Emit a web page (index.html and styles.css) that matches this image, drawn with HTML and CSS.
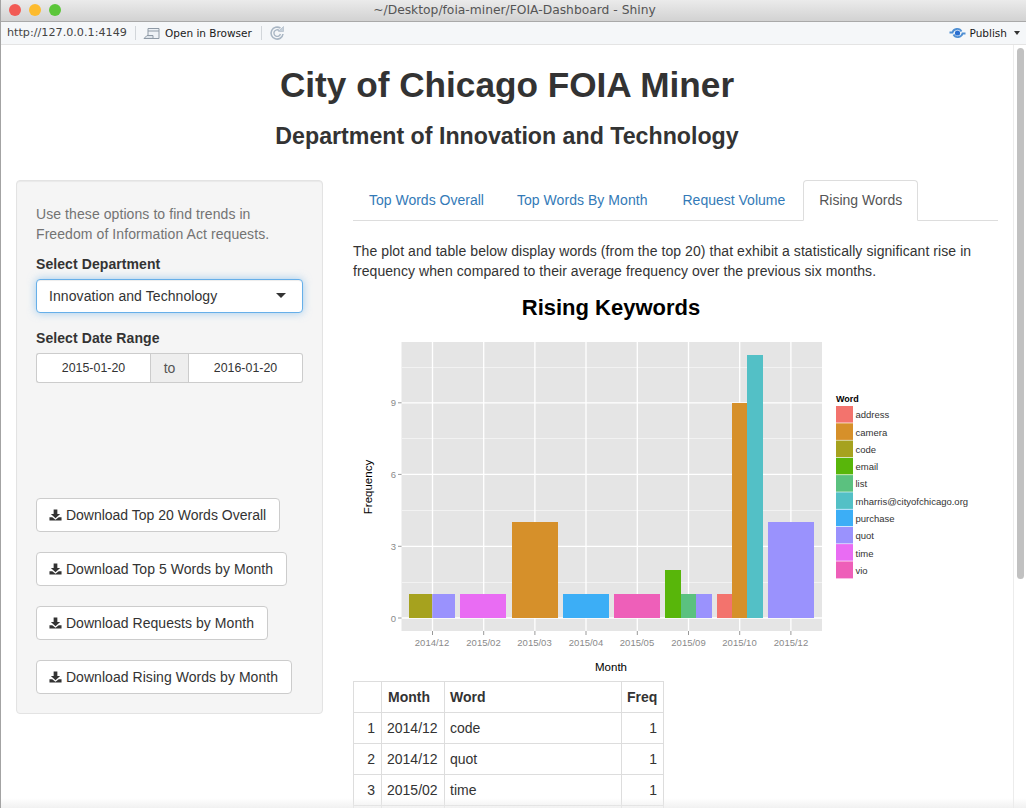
FILE: index.html
```html
<!DOCTYPE html>
<html lang="en">
<head>
<meta charset="utf-8">
<title>City of Chicago FOIA Miner</title>
<link rel="stylesheet" href="styles.css">
</head>
<body>
<div class="window">
  <header class="titlebar">
    <div class="lights"><span class="light red"></span><span class="light yellow"></span><span class="light green"></span></div>
    <div class="window-title">~/Desktop/foia-miner/FOIA-Dashboard - Shiny</div>
  </header>
  <nav class="toolbar">
    <span class="url">http://127.0.0.1:4149</span>
    <span class="sep sep-first"></span>
    <svg class="tool-icon open-icon" width="18" height="14" viewBox="0 0 18 14"><path d="M5 2.500h11v10H5z" fill="#eef2f6" stroke="#8f9aa6"/><path d="M5 5h11" stroke="#8f9aa6"/><path d="M1 12.500l3-3h6v3z" fill="#dfe5eb" stroke="#8f9aa6"/></svg>
    <span class="tool-text">Open in Browser</span>
    <span class="sep sep-second"></span>
    <svg class="tool-icon" width="16" height="16" viewBox="0 0 16 16"><path d="M11.500 3.200A6 6 0 1 0 14 9" fill="none" stroke="#a9b6c4" stroke-width="1.600"/><path d="M10.200 5.400A3.300 3.300 0 1 0 11.400 9" fill="none" stroke="#a9b6c4" stroke-width="1.400"/><path d="M9.500 6.500h5v-5z" fill="#c5d0da" stroke="#a9b6c4" stroke-width=".6"/></svg>
    <span class="spacer"></span>
    <svg class="publish-icon" width="17" height="12" viewBox="0 0 17 12"><path d="M0.500 5.500h3c1-4 7-5 9-1" fill="none" stroke="#4f8fd3" stroke-width="1.800"/><path d="M16.500 6.500h-3c-1 4-7 5-9 1" fill="none" stroke="#4f8fd3" stroke-width="1.800"/><circle cx="8.500" cy="6" r="2.600" fill="#2a6fd0"/></svg>
    <span class="tool-text">Publish</span>
    <span class="menu-caret"></span>
  </nav>
  <div class="viewport">
    <main class="page">
      <h1 class="page-title">City of Chicago FOIA Miner</h1>
      <h2 class="page-subtitle">Department of Innovation and Technology</h2>
      <div class="columns">
        <aside class="well">
          <p class="help">Use these options to find trends in Freedom of Information Act requests.</p>
          <div class="field-label">Select Department</div>
          <div class="select">Innovation and Technology<span class="select-caret"></span></div>
          <div class="field-label date-label">Select Date Range</div>
          <div class="daterange">
            <span class="date">2015-01-20</span>
            <span class="date-to">to</span>
            <span class="date">2016-01-20</span>
          </div>
          <div class="downloads">
            <a class="btn"><svg class="dl" width="13" height="14" viewBox="0 0 14 14"><path d="M5 1h4v5h3L7 10.500 2 6h3z"/><path d="M0.500 9.500h3L7 12l3.500-2.500h3V13H.5z"/></svg> Download Top 20 Words Overall</a>
            <a class="btn btn-wide"><svg class="dl" width="13" height="14" viewBox="0 0 14 14"><path d="M5 1h4v5h3L7 10.500 2 6h3z"/><path d="M0.500 9.500h3L7 12l3.500-2.500h3V13H.5z"/></svg> Download Top 5 Words by Month</a>
            <a class="btn btn-wide"><svg class="dl" width="13" height="14" viewBox="0 0 14 14"><path d="M5 1h4v5h3L7 10.500 2 6h3z"/><path d="M0.500 9.500h3L7 12l3.500-2.500h3V13H.5z"/></svg> Download Requests by Month</a>
            <a class="btn btn-wide"><svg class="dl" width="13" height="14" viewBox="0 0 14 14"><path d="M5 1h4v5h3L7 10.500 2 6h3z"/><path d="M0.500 9.500h3L7 12l3.500-2.500h3V13H.5z"/></svg> Download Rising Words by Month</a>
          </div>
        </aside>
        <section class="main">
          <ul class="tabs">
            <li class="tab">Top Words Overall</li>
            <li class="tab">Top Words By Month</li>
            <li class="tab">Request Volume</li>
            <li class="tab active">Rising Words</li>
          </ul>
          <p class="intro">The plot and table below display words (from the top 20) that exhibit a statistically significant rise in frequency when compared to their average frequency over the previous six months.</p>
          <svg class="chart" width="645" height="390" viewBox="353 291 645 390">
            <text class="c-title" x="611" y="315" text-anchor="middle">Rising Keywords</text>
            <rect x="401.500" y="342" width="420.500" height="289" fill="#e5e5e5"/>
            <g stroke="#f2f2f2" stroke-width="1">
              <path d="M401.500 582.500H822M401.500 510.500H822M401.500 438.500H822M401.500 367.500H822"/>
            </g>
            <g stroke="#fff" stroke-width="1.300">
              <path d="M401.500 618H822M401.500 546.300H822M401.500 474.400H822M401.500 402.800H822"/>
              <path d="M432.500 342V631M483.700 342V631M534.900 342V631M586 342V631M637.300 342V631M688.500 342V631M739.700 342V631M790.900 342V631"/>
            </g>
            <rect x="409" y="594" width="23.300" height="24" fill="#a6a21e"/>
            <rect x="432.300" y="594" width="22.700" height="24" fill="#9a92fd"/>
            <rect x="460" y="594" width="46" height="24" fill="#e96cf3"/>
            <rect x="512" y="522" width="46" height="96" fill="#d6902a"/>
            <rect x="563" y="594" width="46" height="24" fill="#3caef6"/>
            <rect x="614" y="594" width="46" height="24" fill="#ee5fb9"/>
            <rect x="665" y="570" width="16" height="48" fill="#58b60a"/>
            <rect x="681" y="594" width="15" height="24" fill="#5bc17f"/>
            <rect x="696" y="594" width="16" height="24" fill="#9a92fd"/>
            <rect x="717" y="594" width="15" height="24" fill="#f3736d"/>
            <rect x="732" y="403" width="15" height="215" fill="#d6902a"/>
            <rect x="747" y="355" width="16" height="263" fill="#53c0c6"/>
            <rect x="768" y="522" width="46" height="96" fill="#9a92fd"/>
            <g stroke="#999" stroke-width="1">
              <path d="M398 618H401.500M398 546.300H401.500M398 474.400H401.500M398 402.800H401.500"/>
              <path d="M432.500 631V635M483.700 631V635M534.900 631V635M586 631V635M637.300 631V635M688.500 631V635M739.700 631V635M790.900 631V635"/>
            </g>
            <g class="c-tick" text-anchor="end">
              <text x="396" y="621.500">0</text><text x="396" y="549.800">3</text><text x="396" y="478">6</text><text x="396" y="406.300">9</text>
            </g>
            <g class="c-tick" text-anchor="middle">
              <text x="432" y="646">2014/12</text><text x="483.500" y="646">2015/02</text><text x="534.500" y="646">2015/03</text><text x="586" y="646">2015/04</text><text x="637" y="646">2015/05</text><text x="688.500" y="646">2015/09</text><text x="739.500" y="646">2015/10</text><text x="791" y="646">2015/12</text>
            </g>
            <text class="c-axis" x="611" y="671" text-anchor="middle">Month</text>
            <text class="c-axis" transform="translate(372 487) rotate(-90)" text-anchor="middle">Frequency</text>
            <text class="c-legend-title" x="836" y="402">Word</text>
            <rect x="836" y="406" width="17" height="16.600" fill="#f3736d"/>
            <rect x="836" y="423.300" width="17" height="16.600" fill="#d6902a"/>
            <rect x="836" y="440.500" width="17" height="16.600" fill="#a6a21e"/>
            <rect x="836" y="457.800" width="17" height="16.600" fill="#58b60a"/>
            <rect x="836" y="475.100" width="17" height="16.600" fill="#5bc17f"/>
            <rect x="836" y="492.300" width="17" height="16.600" fill="#53c0c6"/>
            <rect x="836" y="509.600" width="17" height="16.600" fill="#3caef6"/>
            <rect x="836" y="526.900" width="17" height="16.600" fill="#9a92fd"/>
            <rect x="836" y="544.100" width="17" height="16.600" fill="#e96cf3"/>
            <rect x="836" y="561.400" width="17" height="17" fill="#ee5fb9"/>
            <g class="c-legend">
              <text x="855.500" y="418">address</text><text x="855.500" y="436">camera</text><text x="855.500" y="453">code</text><text x="855.500" y="470">email</text><text x="855.500" y="487">list</text><text x="855.500" y="505">mharris@cityofchicago.org</text><text x="855.500" y="522">purchase</text><text x="855.500" y="539">quot</text><text x="855.500" y="557">time</text><text x="855.500" y="574">vio</text>
            </g>
          </svg>
          <table class="data">
            <thead>
              <tr><th class="c-idx"></th><th class="c-month">Month</th><th class="c-word">Word</th><th class="num">Freq</th></tr>
            </thead>
            <tbody>
              <tr><td class="num">1</td><td>2014/12</td><td>code</td><td class="num">1</td></tr>
              <tr><td class="num">2</td><td>2014/12</td><td>quot</td><td class="num">1</td></tr>
              <tr><td class="num">3</td><td>2015/02</td><td>time</td><td class="num">1</td></tr>
              <tr><td></td><td></td><td></td><td></td></tr>
            </tbody>
          </table>
        </section>
      </div>
    </main>
    <div class="scrolltrack"><div class="scrollthumb"></div></div>
  </div>
  <div class="bottom-fade"></div>
</div>
</body>
</html>
```

FILE: styles.css
```css
* { box-sizing: border-box; }
html, body { margin: 0; padding: 0; height: 100%; overflow: hidden; background: #fff; }
body { font-family: "Liberation Sans", Arial, sans-serif; font-size: 14px; line-height: 20px; color: #333; }

.window { position: relative; height: 808px; display: flex; flex-direction: column; border-left: 1px solid #a3a3a3; overflow: hidden; }

.titlebar { flex: 0 0 21px; position: relative; display: flex; align-items: center; justify-content: center; background: linear-gradient(#ebebeb, #d2d2d2); border-bottom: 1px solid #a9a9a9; }
.lights { position: absolute; left: 8px; top: 4px; display: flex; gap: 8px; }
.light { width: 12px; height: 12px; border-radius: 50%; }
.red { background: #f25b55; }
.yellow { background: #fdbb2e; }
.green { background: #5cc63a; }
.window-title { font-family: "DejaVu Sans", sans-serif; font-size: 12.300px; color: #555; line-height: 21px; padding-left: 2px; }

.toolbar { flex: 0 0 23px; display: flex; align-items: center; padding: 0 6px; background: #f5f7f9; border-bottom: 1px solid #e4e4e4; font-family: "DejaVu Sans", sans-serif; font-size: 10.500px; color: #111; }
.url { color: #444; flex: 0 0 128px; font-size: 11.200px; }
.sep { width: 1px; height: 14px; background: #d2d6da; }
.sep-first { margin-right: 7px; }
.sep-second { margin: 0 7px 0 9px; }
.tool-icon { flex: none; }
.open-icon { margin-right: 4px; }
.tool-text { color: #1a1a1a; }
.spacer { flex: 1; }
.publish-icon { margin-right: 4px; }
.menu-caret { width: 0; height: 0; margin-left: 7px; border: 3px solid transparent; border-top: 4px solid #333; border-bottom: 0; }

.viewport { flex: 1; min-height: 0; display: flex; }
.page { flex: 0 0 1012px; min-width: 0; padding: 0 15px; }
.page-title { margin: 20px 0 0; text-align: center; font-size: 35.200px; line-height: 40px; font-weight: 700; color: #333; }
.page-subtitle { margin: 18px 0 0; text-align: center; font-size: 23.200px; line-height: 26px; font-weight: 700; color: #333; }

.columns { display: grid; grid-template-columns: 307px 645px; column-gap: 30px; margin-top: 31px; align-items: start; }

.well { height: 534px; padding: 23px 19px 0; background: #f5f5f5; border: 1px solid #e3e3e3; border-radius: 4px; box-shadow: inset 0 1px 1px rgba(0,0,0,.05); }
.help { margin: 0 0 10px; width: 255px; color: #737373; letter-spacing: .08px; }
.field-label { font-weight: 700; height: 20px; letter-spacing: .08px; }
.select { position: relative; margin-top: 5px; height: 34px; padding: 0 12px; line-height: 32px; background: #fff; border: 1px solid #66afe9; border-radius: 4px; box-shadow: inset 0 1px 1px rgba(0,0,0,.075), 0 0 8px rgba(102,175,233,.6); letter-spacing: .08px; }
.select-caret { position: absolute; right: 16px; top: 13px; width: 0; height: 0; border: 5px solid transparent; border-top: 5px solid #333; border-bottom: 0; }
.date-label { margin-top: 15px; }
.daterange { display: flex; margin-top: 5px; height: 30px; }
.date { flex: 1; display: flex; align-items: center; justify-content: center; font-size: 12.400px; background: #fff; border: 1px solid #ccc; }
.date:first-child { border-radius: 3px 0 0 3px; border-right: 0; }
.date:last-child { border-radius: 0 3px 3px 0; border-left: 0; }
.date-to { flex: 0 0 39px; display: flex; align-items: center; justify-content: center; background: #eee; border: 1px solid #ccc; color: #555; }

.downloads { display: flex; flex-direction: column; align-items: flex-start; gap: 20px; margin-top: 115px; }
.btn { display: inline-flex; align-items: center; height: 34px; padding: 0 13px 0 12px; background: #fff; border: 1px solid #ccc; border-radius: 4px; color: #333; white-space: pre; }
.btn-wide { letter-spacing: .05px; }
.dl { fill: #333; flex: none; }

.tabs { display: flex; margin: 0; padding: 0 0 0 1px; list-style: none; height: 41px; border-bottom: 1px solid #ddd; }
.tab { height: 40px; padding: 10px 15px; margin-right: 3px; color: #337ab7; }
.tab:nth-child(2) { margin-right: 5px; letter-spacing: .05px; }
.tab:nth-child(3) { margin-right: 3px; }
.tab.active { height: 41px; padding: 9px 15px 10px; color: #555; background: #fff; border: 1px solid #ddd; border-bottom-color: #fff; border-radius: 4px 4px 0 0; }
.intro { margin: 20px 0 0; letter-spacing: .07px; }
.chart { display: block; margin-top: 10px; }
.chart text { font-family: "Liberation Sans", Arial, sans-serif; }
.c-title { font-size: 22px; font-weight: 700; fill: #000; }
.c-tick { font-size: 9.500px; fill: #8a8a8a; }
.c-axis { font-size: 11.500px; fill: #000; }
.c-legend-title { font-size: 9px; font-weight: 700; fill: #000; }
.c-legend { font-size: 9.500px; fill: #333; }

.data { border-collapse: collapse; table-layout: fixed; width: 311px; margin-top: 0; }
.data th, .data td { height: 31px; padding: 0 5px; border: 1px solid #ddd; text-align: left; }
.data th { font-weight: 700; }
.data th.c-month { padding-left: 6px; }
.data .num { text-align: right; padding-right: 6px; }
.c-idx { width: 28px; }
.c-month { width: 63px; }
.c-word { width: 177px; }

.scrolltrack { flex: 0 0 13px; padding: 3px 2px 0 3px; background: #fff; border-left: 1px solid #ececec; }
.scrollthumb { width: 7px; height: 531px; background: #c1c1c1; border-radius: 4px; }

.bottom-fade { position: absolute; left: 0; right: 0; bottom: 0; height: 10px; background: linear-gradient(rgba(235,235,235,0), rgba(235,235,235,.7)); pointer-events: none; }
```
